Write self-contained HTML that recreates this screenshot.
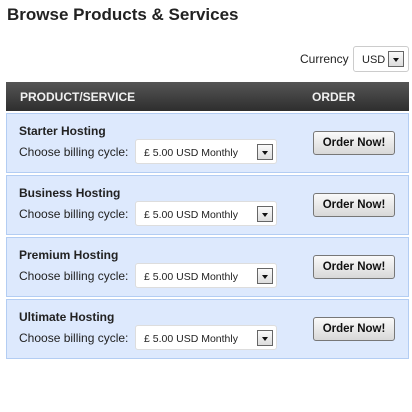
<!DOCTYPE html>
<html><head><style>
body{margin:0;background:#fff;font-family:"Liberation Sans",Arial,sans-serif;width:412px;height:412px;overflow:hidden;position:relative}
h1{position:absolute;left:7px;top:5px;margin:0;font-size:17px;font-weight:bold;color:#222}
.cur{position:absolute;left:300px;top:52px;font-size:12px;color:#222}
.cursel{position:absolute;left:353px;top:46px;width:56px;height:26px;border:1px solid #ccc;border-radius:3px;background:#fff;box-sizing:border-box}
.cursel span{position:absolute;left:8px;top:7px;font-size:11px;color:#222}
.arr{position:absolute;width:16px;height:16px;border:1px solid #666;box-sizing:border-box;background:linear-gradient(#fafafa,#ddd)}
.arr:after{content:"";position:absolute;left:4px;top:6px;border-left:3px solid transparent;border-right:3px solid transparent;border-top:4px solid #111}
.head{position:absolute;left:6px;top:82px;width:403px;height:29px;background:linear-gradient(#555,#2e2e2e);color:#f0f0f0;font-size:12px;font-weight:bold}
.head span{position:absolute;top:8px}
.row{position:absolute;left:6px;width:403px;height:60px;background:#dde9fd;border:1px solid #b3cdf3;box-sizing:border-box}
.row b{position:absolute;left:12px;top:10px;font-size:12px;color:#222}
.row .lbl{position:absolute;left:12px;top:31px;font-size:12px;color:#222}
.sel{position:absolute;left:128px;top:25px;width:142px;height:25px;background:#fff;border:1px solid #ddd;border-radius:3px;box-sizing:border-box}
.sel span{position:absolute;left:8px;top:7px;font-size:10.5px;color:#222}
.btn{position:absolute;left:306px;top:17px;width:82px;height:24px;border:1px solid #777;border-radius:3px;box-sizing:border-box;background:linear-gradient(#fafafa,#d8d8d8);font-size:11.5px;font-weight:bold;color:#111;text-align:center;line-height:22px}
</style></head><body>
<h1>Browse Products &amp; Services</h1>
<div class="cur">Currency</div>
<div class="cursel"><span>USD</span><div class="arr" style="left:34px;top:4px"></div></div>
<div class="head"><span style="left:14px">PRODUCT/SERVICE</span><span style="left:306px">ORDER</span></div>

<div class="row" style="top:113px"><b>Starter Hosting</b><div class="lbl">Choose billing cycle:</div><div class="sel"><span>£ 5.00 USD Monthly</span><div class="arr" style="left:121px;top:4px"></div></div><div class="btn">Order Now!</div></div>
<div class="row" style="top:175px"><b>Business Hosting</b><div class="lbl">Choose billing cycle:</div><div class="sel"><span>£ 5.00 USD Monthly</span><div class="arr" style="left:121px;top:4px"></div></div><div class="btn">Order Now!</div></div>
<div class="row" style="top:237px"><b>Premium Hosting</b><div class="lbl">Choose billing cycle:</div><div class="sel"><span>£ 5.00 USD Monthly</span><div class="arr" style="left:121px;top:4px"></div></div><div class="btn">Order Now!</div></div>
<div class="row" style="top:299px"><b>Ultimate Hosting</b><div class="lbl">Choose billing cycle:</div><div class="sel"><span>£ 5.00 USD Monthly</span><div class="arr" style="left:121px;top:4px"></div></div><div class="btn">Order Now!</div></div>
</body></html>
